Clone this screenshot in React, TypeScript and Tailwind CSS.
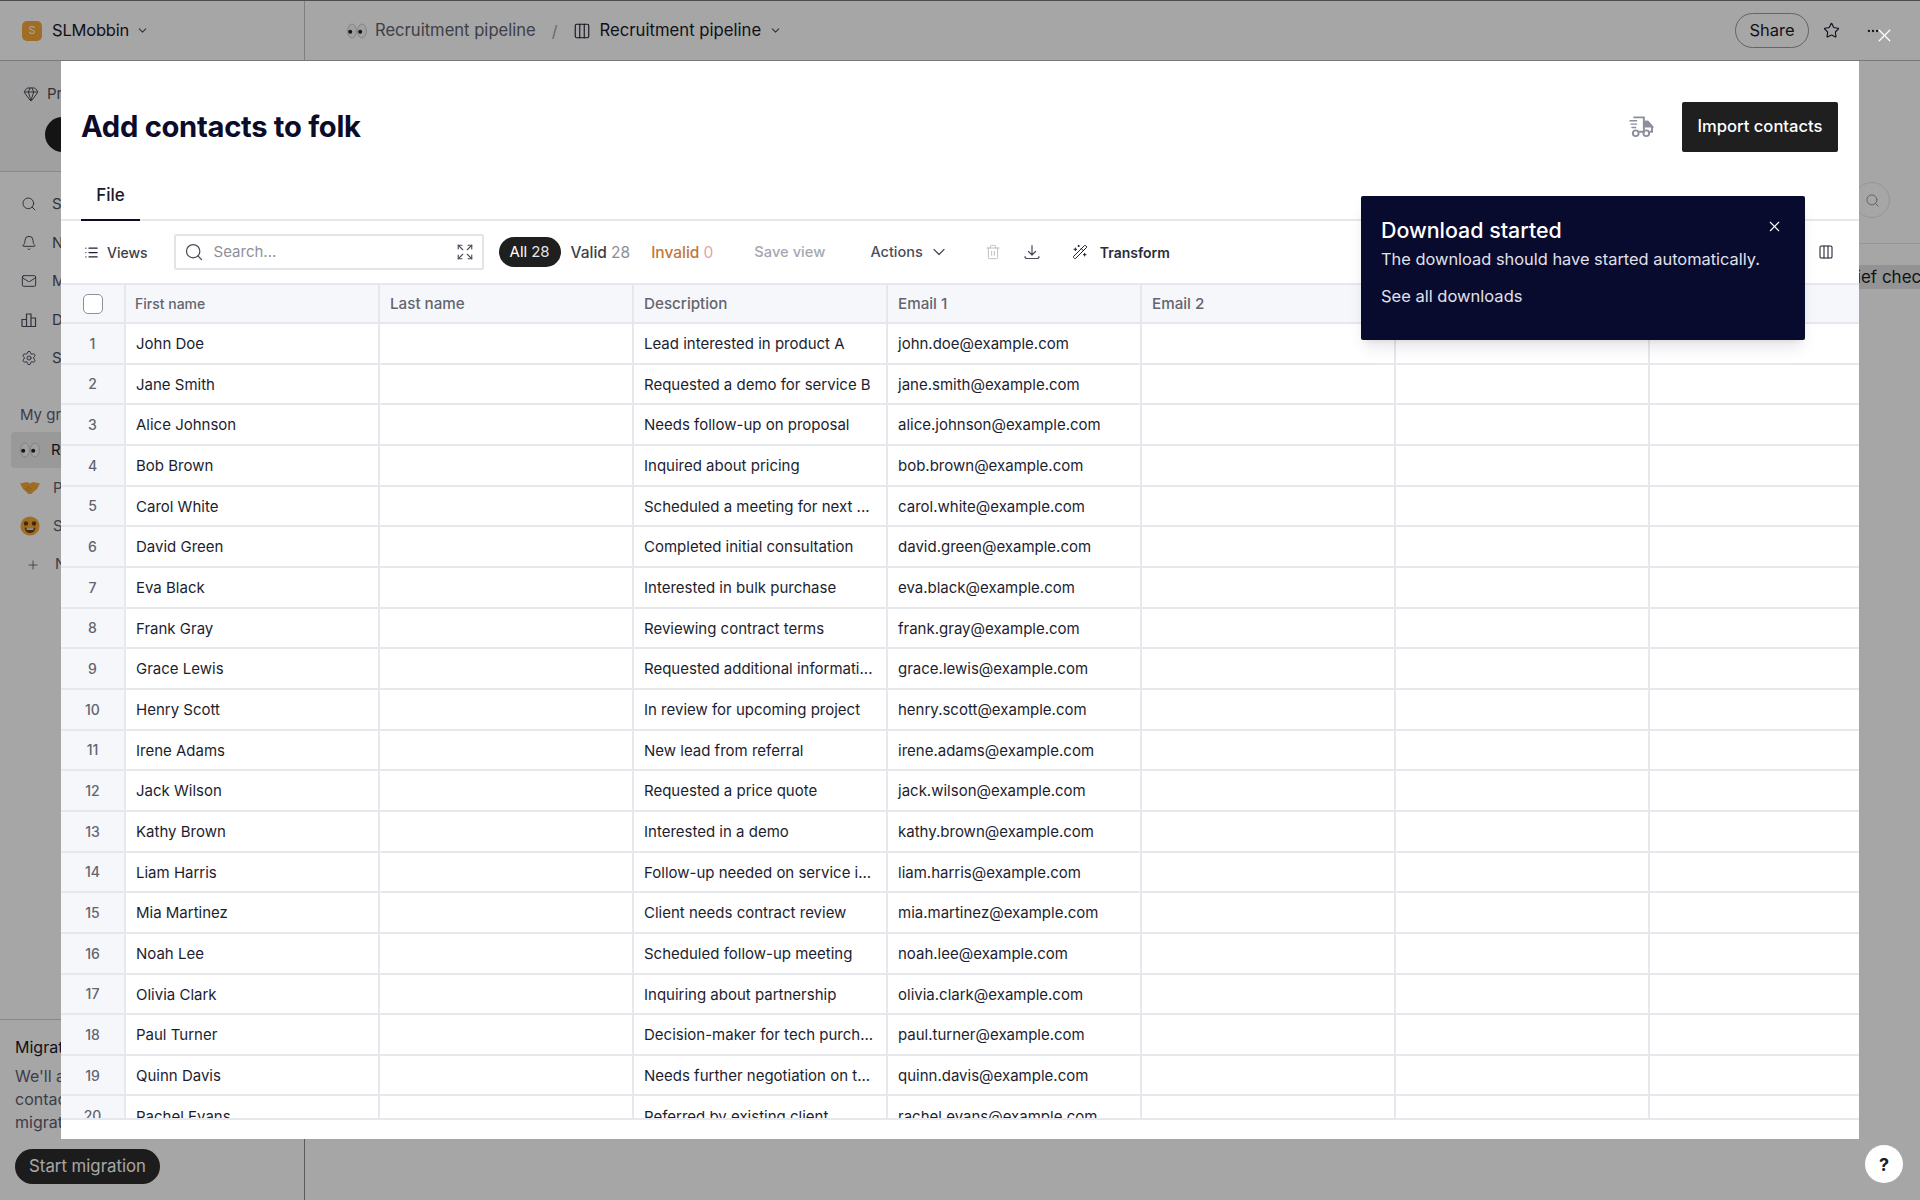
import React from "react";
import {
  ChevronDown,
  Columns3,
  Expand,
  Gem,
  List,
  MoreHorizontal,
  Plus,
  Search,
  Settings,
  Star,
  Trash2,
  WandSparkles,
  X,
  Bell,
  Mail,
} from "lucide-react";

const contacts = [
  ["John Doe", "Lead interested in product A", "john.doe@example.com"],
  ["Jane Smith", "Requested a demo for service B", "jane.smith@example.com"],
  ["Alice Johnson", "Needs follow-up on proposal", "alice.johnson@example.com"],
  ["Bob Brown", "Inquired about pricing", "bob.brown@example.com"],
  ["Carol White", "Scheduled a meeting for next ...", "carol.white@example.com"],
  ["David Green", "Completed initial consultation", "david.green@example.com"],
  ["Eva Black", "Interested in bulk purchase", "eva.black@example.com"],
  ["Frank Gray", "Reviewing contract terms", "frank.gray@example.com"],
  ["Grace Lewis", "Requested additional informati...", "grace.lewis@example.com"],
  ["Henry Scott", "In review for upcoming project", "henry.scott@example.com"],
  ["Irene Adams", "New lead from referral", "irene.adams@example.com"],
  ["Jack Wilson", "Requested a price quote", "jack.wilson@example.com"],
  ["Kathy Brown", "Interested in a demo", "kathy.brown@example.com"],
  ["Liam Harris", "Follow-up needed on service i...", "liam.harris@example.com"],
  ["Mia Martinez", "Client needs contract review", "mia.martinez@example.com"],
  ["Noah Lee", "Scheduled follow-up meeting", "noah.lee@example.com"],
  ["Olivia Clark", "Inquiring about partnership", "olivia.clark@example.com"],
  ["Paul Turner", "Decision-maker for tech purch...", "paul.turner@example.com"],
  ["Quinn Davis", "Needs further negotiation on t...", "quinn.davis@example.com"],
  ["Rachel Evans", "Referred by existing client", "rachel.evans@example.com"],
];

function Eyes({ className }: { className?: string }) {
  return (
    <svg viewBox="0 0 20 16" className={className}>
      <ellipse cx="5" cy="8" rx="4.4" ry="7" fill="#f6f6f6" stroke="#b8b8b8" strokeWidth="0.7" />
      <ellipse cx="15" cy="8" rx="4.4" ry="7" fill="#f6f6f6" stroke="#b8b8b8" strokeWidth="0.7" />
      <circle cx="3.2" cy="8.8" r="2" fill="#222" />
      <circle cx="13.2" cy="8.8" r="2" fill="#222" />
    </svg>
  );
}

function Handshake() {
  return (
    <svg viewBox="0 0 20 14" className="w-5 h-[14px]">
      <path d="M0 2.5 L7 1 L10 2.5 L13 1 L20 2.5 L17 8 L11 13 L8.5 13 L3 8 Z" fill="#f2a83a" />
      <path d="M7 5 L11 8 M6 7 L9.5 10" stroke="#c77f1a" strokeWidth="0.8" />
    </svg>
  );
}

function MoneyFace() {
  return (
    <svg viewBox="0 0 20 20" className="w-5 h-5">
      <circle cx="10" cy="10" r="9.6" fill="#f5a93a" />
      <circle cx="6" cy="7.5" r="2.2" fill="#6a3d10" />
      <circle cx="14" cy="7.5" r="2.2" fill="#6a3d10" />
      <path d="M4.5 11.5 Q10 13 15.5 11.5 Q14.5 17 10 17 Q5.5 17 4.5 11.5 Z" fill="#6a3d10" />
      <rect x="6.5" y="12.3" width="7" height="1.5" fill="#fff" />
    </svg>
  );
}

function ChartIcon() {
  return (
    <svg viewBox="0 0 16 16" fill="none" stroke="currentColor" strokeWidth="1.2" className="w-4 h-4">
      <path d="M1 14.5V7.5h4.5v7M5.5 14.5V2h4.5v12.5M10 14.5V6h4.5v8.5ZM1 14.5h13.5" />
    </svg>
  );
}

function TruckIcon() {
  return (
    <svg viewBox="0 0 26 24" fill="none" stroke="#8b8f9c" strokeWidth="2" className="w-[26px] h-[23px]">
      <path d="M5 2.5h11v15h-5M16 7h4l4.5 5v5.5H22" />
      <path d="M16 7h4l4.5 5H16Z" fill="#8b8f9c" />
      <path d="M1 6h8M2 9.5h7M3 13h5" strokeWidth="1.5" />
      <circle cx="7.5" cy="19" r="3" />
      <circle cx="18.5" cy="19" r="3" />
    </svg>
  );
}

function DownloadIcon() {
  return (
    <svg viewBox="0 0 16 16" fill="none" stroke="#4a4d5a" strokeWidth="1.2" strokeLinecap="round" strokeLinejoin="round" className="w-4 h-4">
      <path d="M8 1.5v9M4.5 7.5 8 11l3.5-3.5M1 12.5c0 1.2 1 2 2 2h10c1 0 2-.8 2-2" />
    </svg>
  );
}

function SideItem({ icon, label }: { icon: React.ReactNode; label: string }) {
  return (
    <div className="flex items-center h-[38.5px] pl-[21px] text-[#4b4e5c]">
      <div className="w-[31px] flex">{icon}</div>
      <span className="text-[15px] whitespace-nowrap">{label}</span>
    </div>
  );
}

function Sidebar() {
  return (
    <aside className="w-[305px] h-full flex flex-col border-r border-[#8a8a8a] bg-white">
      <div className="h-[111px] pl-[23px] pt-[22px] border-b border-[#d4d4d4] bg-[#f6f6f7] shrink-0">
        <div className="flex items-center gap-2 text-[15px] text-[#4b4e5c]">
          <Gem className="w-4 h-4" strokeWidth={1.5} />
          Pro plan
        </div>
        <div className="mt-[11px] ml-[22px] h-[35px] w-[150px] rounded-full bg-[#1f1f1f]" />
      </div>
      <div className="pt-[13px]">
        <SideItem icon={<Search className="w-4 h-4" strokeWidth={1.5} />} label="Search" />
        <SideItem icon={<Bell className="w-4 h-4" strokeWidth={1.5} />} label="Notifications" />
        <SideItem icon={<Mail className="w-4 h-4" strokeWidth={1.5} />} label="Mailbox" />
        <SideItem icon={<ChartIcon />} label="Dashboards" />
        <SideItem icon={<Settings className="w-4 h-4" strokeWidth={1.5} />} label="Settings" />
      </div>
      <div className="mt-[26px] pl-[20px] text-[15px] text-[#5d6070]">My groups</div>
      <div className="mt-[6px] mx-[11px] h-[36px] rounded flex items-center pl-[9px] bg-[#ececec] text-[15px] text-[#1a1a2a]">
        <Eyes className="w-5 h-4 mr-[11px]" />
        Recruitment pipeline
      </div>
      <div className="flex items-center h-[38px] pl-[20px] text-[15px] text-[#5d6070] mt-[1px]">
        <div className="w-[33px] flex"><Handshake /></div>
        Partners
      </div>
      <div className="flex items-center h-[38px] pl-[20px] text-[15px] text-[#5d6070]">
        <div className="w-[33px] flex"><MoneyFace /></div>
        Sales
      </div>
      <div className="flex items-center h-[39px] pl-[26px] text-[15px] text-[#5d6070]">
        <Plus className="w-[14px] h-[14px] mr-[15px]" strokeWidth={1.5} />
        New group
      </div>
      <div className="mt-auto border-t border-[#cfcfcf] h-[181px] px-[15px] pt-[15px] shrink-0">
        <div className="text-[16px] leading-[24px] text-[#1a1a2a] whitespace-nowrap">Migrate your data</div>
        <div className="mt-[6px] text-[16px] leading-[23px] text-[#5d6070] whitespace-nowrap">
          We'll automatically import all your
          <br />
          contacts and companies after the
          <br />
          migration is complete.
        </div>
        <button className="mt-[15px] h-[35px] w-[145px] rounded-full bg-[#2b2b2b] text-white text-[16.8px]">
          Start migration
        </button>
      </div>
    </aside>
  );
}

function TopBar() {
  return (
    <header className="h-[61px] flex items-stretch border-b border-[#b8b8b8] border-t border-t-[#777] bg-white shrink-0">
      <div className="w-[305px] flex items-center pl-[22px] border-r border-[#c4c4c4]">
        <div className="w-[20px] h-[20px] rounded-[5px] bg-[#f5a83a] text-white text-[11px] flex items-center justify-center">S</div>
        <span className="ml-[10px] text-[16.5px] text-[#1a1a2a] tracking-[-0.2px]">SLMobbin</span>
        <ChevronDown className="ml-[7px] w-[13px] h-[13px] text-[#4b4e5c]" />
      </div>
      <div className="flex-1 flex items-center pl-[42px] pr-[40px]">
        <Eyes className="w-5 h-4 mr-[8px]" />
        <span className="text-[16.6px] text-[#60636f]">Recruitment pipeline</span>
        <span className="ml-[16px] mr-[15px] text-[16px] text-[#a0a0a6]">/</span>
        <Columns3 className="w-[18px] h-[18px] text-[#1f2030]" strokeWidth={1.5} />
        <span className="ml-[9px] text-[16.7px] text-[#1a1a2a]">Recruitment pipeline</span>
        <ChevronDown className="ml-[8px] w-[13px] h-[13px] text-[#4b4e5c]" />
        <button className="ml-auto h-[35px] w-[74px] rounded-full border border-[#9a9a9a] text-[16.5px] text-[#1a1a2a]">Share</button>
        <Star className="ml-[14px] w-[17px] h-[17px] text-[#1a1a2a]" strokeWidth={1.6} />
        <MoreHorizontal className="ml-[26px] w-[14px] h-[14px] text-[#1a1a2a]" />
      </div>
    </header>
  );
}

function Toolbar() {
  return (
    <div className="h-[62px] flex items-center pl-[23px] shrink-0 relative">
      <List className="w-[15px] h-[15px] text-[#1f2030]" strokeWidth={2} />
      <span className="ml-[8px] text-[14px] font-medium text-[#3c3f4c]">Views</span>
      <div className="ml-[26px] w-[310px] h-[36px] border-2 border-[#e2e4e8] flex items-center pl-[8px] pr-[8px] rounded-[2px]">
        <Search className="w-5 h-5 text-[#4a4d5a]" strokeWidth={1.5} />
        <span className="ml-[10px] text-[15px] text-[#8d909b]">Search...</span>
        <Expand className="ml-auto w-[18px] h-[18px] text-[#4a4d5a]" strokeWidth={1.5} />
      </div>
      <div className="ml-[15px] h-[30px] w-[62px] rounded-full bg-[#1f1f1f] text-white text-[15px] flex items-center justify-center gap-[4px]">
        All <span className="text-[#e4e4e4]">28</span>
      </div>
      <div className="ml-[10px] pt-[1px] text-[15.5px] font-medium text-[#3c3f4c]">
        Valid <span className="font-normal text-[#8d909b]">28</span>
      </div>
      <div className="ml-[21px] pt-[1px] text-[15.5px] font-medium text-[#c2773a]">
        Invalid <span className="font-normal text-[#e5a3a3]">0</span>
      </div>
      <span className="ml-[41px] text-[14.7px] font-medium text-[#a5a8b0]">Save view</span>
      <span className="ml-[45px] text-[14.5px] font-medium text-[#4a4d5a]">Actions</span>
      <ChevronDown className="ml-[6px] w-[20px] h-[20px] text-[#4a4d5a]" strokeWidth={1.5} />
      <Trash2 className="ml-[36px] w-4 h-4 text-[#b4b7bf]" strokeWidth={1.3} />
      <div className="ml-[23px]"><DownloadIcon /></div>
      <WandSparkles className="ml-[32px] w-4 h-4 text-[#1f2030]" strokeWidth={1.5} />
      <span className="ml-[12px] text-[14px] font-semibold text-[#2a2c3a]">Transform</span>
      <Columns3 className="absolute right-[25px] top-[23px] w-4 h-4 text-[#1f2030]" strokeWidth={1.6} />
    </div>
  );
}

const colClass = "w-[254px] shrink-0 border-r-2 border-[#e6e8ee] pl-[10px] pr-[8px] flex items-center whitespace-nowrap overflow-hidden";

function Table() {
  return (
    <div className="h-[837px] border-t-2 border-b-2 border-[#e6e8ee] overflow-hidden">
      <div className="h-[39px] flex bg-[#f6f7fb] border-b-2 border-[#e6e8ee] text-[15.2px] font-medium text-[#62656f]">
        <div className="w-[65px] shrink-0 border-r-2 border-[#e6e8ee] flex items-center justify-center">
          <div className="w-5 h-5 rounded-[5px] border border-[#8d909b] bg-white" />
        </div>
        <div className={`${colClass} !pl-[9px] text-[14px]`}>First name</div>
        <div className={`${colClass} pt-[2px]`}>Last name</div>
        <div className={`${colClass} pt-[2px]`}>Description</div>
        <div className={`${colClass} pt-[2px]`}>Email 1</div>
        <div className={`${colClass} pt-[2px]`}>Email 2</div>
        <div className={colClass} />
        <div className="flex-1" />
      </div>
      {contacts.map((c, i) => (
        <div key={c[2]} className="h-[40.67px] flex border-b-2 border-[#e6e8ee] text-[15px] text-[#1c1e30]">
          <div className="w-[65px] shrink-0 border-r-2 border-[#e6e8ee] bg-[#f6f7fb] flex items-center justify-center text-[14px] font-medium text-[#62656f]">
            {i + 1}
          </div>
          <div className={`${colClass} pt-[2px]`}>{c[0]}</div>
          <div className={colClass} />
          <div className={`${colClass} pt-[2px]`}>{c[1]}</div>
          <div className={`${colClass} pt-[2px]`}>{c[2]}</div>
          <div className={colClass} />
          <div className={colClass} />
          <div className="flex-1" />
        </div>
      ))}
    </div>
  );
}

export default function App() {
  return (
    <div className="relative w-[1920px] h-[1200px] overflow-hidden bg-white flex flex-col font-['Inter',sans-serif]">
      <TopBar />
      <div className="flex flex-1 min-h-0">
        <Sidebar />
        <main className="flex-1 flex flex-col items-end">
          <div className="h-[183px] w-full border-b border-[#e6e6e6] flex justify-end pr-[30px] pt-[121px]">
            <div className="w-[36px] h-[36px] rounded-full border border-[#e6e6e6] flex items-center justify-center">
              <Search className="w-[15px] h-[15px] text-[#8d909b]" strokeWidth={1.5} />
            </div>
          </div>
          <div className="mt-[21px] h-[24px] w-[120px] bg-[#e2e2e2] text-[17px] leading-[24px] whitespace-nowrap overflow-hidden text-[#1a1a2a] pl-[39px]">
            Brief check
          </div>
        </main>
      </div>

      {/* Dim layer */}
      <div className="absolute inset-0 bg-black/35" />

      <X className="absolute left-[1874px] top-[25px] w-[21px] h-[21px] text-white" strokeWidth={1.5} />
      <button className="absolute left-[1865px] top-[1145px] w-[38px] h-[38px] rounded-full bg-white text-[18px] font-bold text-[#1a1a2a] flex items-center justify-center">
        ?
      </button>

      {/* Import modal */}
      <div className="absolute left-[61px] top-[61px] w-[1798px] h-[1078px] bg-white">
        <div className="h-[100px] flex items-center justify-between pl-[20px] pr-[21px] pt-[31px]">
          <h1 className="text-[29.2px] font-bold text-[#0b0c2a] tracking-[-0.3px]">Add contacts to folk</h1>
          <div className="flex items-center gap-[28px]">
            <TruckIcon />
            <button className="w-[156px] h-[50px] bg-[#1f1f1f] text-white text-[16.6px] font-medium rounded-[2px]">
              Import contacts
            </button>
          </div>
        </div>
        <div className="h-[60px] border-b-2 border-[#e8e8ea] pl-[20px] flex items-end">
          <div className="w-[59px] h-[45px] border-b-2 border-[#0b0c2a] -mb-[2px] flex justify-center pt-[7px] text-[17px] font-medium text-[#1a1a2a]">
            File
          </div>
        </div>
        <Toolbar />
        <Table />

        {/* Toast */}
        <div className="absolute left-[1300px] top-[135px] w-[444px] h-[144px] bg-[#080a2e] rounded-[2px] pl-[20px] pt-[21px] text-white shadow-lg">
          <div className="text-[21.4px] leading-[26px] font-medium">Download started</div>
          <div className="mt-[4px] text-[16.4px] leading-[24px] text-[#e0e1ea]">The download should have started automatically.</div>
          <div className="mt-[13px] text-[16.5px] leading-[24px] text-[#e0e1ea]">See all downloads</div>
          <X className="absolute right-[22px] top-[22px] w-[17px] h-[17px] text-white" strokeWidth={1.5} />
        </div>
      </div>
    </div>
  );
}
